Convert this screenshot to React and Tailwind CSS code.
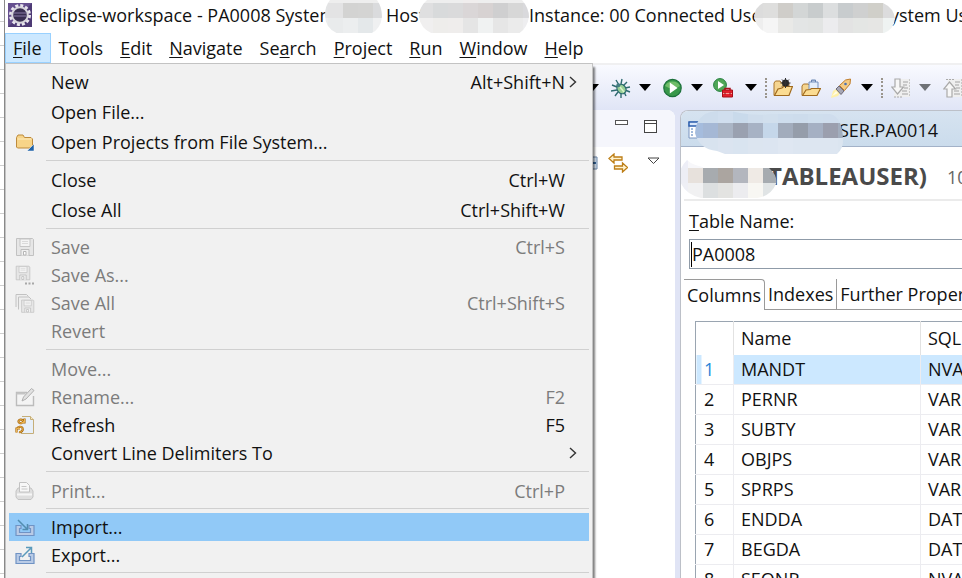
// src/App.jsx
import React from "react";

const MENUS = [
  { key: "F", rest: "ile", active: true },
  { key: "", rest: "Tools" },
  { key: "E", rest: "dit" },
  { key: "N", rest: "avigate" },
  { before: "Se", key: "a", rest: "rch" },
  { key: "P", rest: "roject" },
  { key: "R", rest: "un" },
  { key: "W", rest: "indow" },
  { key: "H", rest: "elp" },
];

const FILE_MENU = [
  { label: "New", keys: "Alt+Shift+N", sub: true, tall: true },
  { label: "Open File...", tall: true },
  { label: "Open Projects from File System...", icon: "project", tall: true },
  { sep: true },
  { label: "Close", keys: "Ctrl+W", tall: true },
  { label: "Close All", keys: "Ctrl+Shift+W", tall: true },
  { sep: true },
  { label: "Save", keys: "Ctrl+S", icon: "save", disabled: true },
  { label: "Save As...", icon: "saveAs", disabled: true },
  { label: "Save All", keys: "Ctrl+Shift+S", icon: "saveAll", disabled: true },
  { label: "Revert", disabled: true },
  { sep: true, wide: true },
  { label: "Move...", disabled: true },
  { label: "Rename...", keys: "F2", icon: "rename", disabled: true },
  { label: "Refresh", keys: "F5", icon: "refresh" },
  { label: "Convert Line Delimiters To", sub: true },
  { sep: true, wide: true },
  { label: "Print...", keys: "Ctrl+P", icon: "print", disabled: true },
  { sep: true },
  { label: "Import...", icon: "import", selected: true },
  { label: "Export...", icon: "export" },
  { sep: true },
];

const ROWS = [
  ["MANDT", "NVARCHAR"],
  ["PERNR", "VARCHAR"],
  ["SUBTY", "VARCHAR"],
  ["OBJPS", "VARCHAR"],
  ["SPRPS", "VARCHAR"],
  ["ENDDA", "DATE"],
  ["BEGDA", "DATE"],
  ["SEQNR", "NVARCHAR"],
];

const Icon = ({ children, className = "h-5 w-5" }) => (
  <svg viewBox="0 0 20 20" fill="none" className={`shrink-0 ${className}`} aria-hidden="true">
    {children}
  </svg>
);

const Floppy = () => (
  <>
    <path d="M1.5 1.5h16l1 1v16h-17z" fill="#e6e6e6" stroke="#c2c2c2" />
    <path d="M5 2h10v7.500H5z" fill="#f4f4f4" stroke="#c6c6c6" />
    <path d="M7 4.500h6M7 6.500h6" stroke="#dadada" />
    <path d="M6 18.500v-6h8v6" fill="#f0f0f0" stroke="#bdbdbd" />
    <path d="M8.500 14.500h2.500v3.500H8.500z" fill="#fff" stroke="#b5b5b5" />
  </>
);

const Tray = () => (
  <path
    d="M1 8.500h5v3H4.500v4h11v-4H14v-3h5v10H1z"
    fill="#b9cbe6"
    stroke="#7093c4"
    strokeWidth="1.200"
  />
);

const MENU_ICONS = {
  project: (
    <>
      <path d="M1.500 15V5.500L3 3h5l1.500 2.500H16L17.500 7v8l-1 1h-14z" fill="#f7d488" stroke="#bd8b3c" />
      <path d="M2.500 7h14" stroke="#fdebbd" />
      <path d="M19 12v7h-7z" fill="#1e62a8" stroke="#fff" strokeWidth=".5" />
    </>
  ),
  save: <Floppy />,
  saveAs: (
    <>
      <g transform="scale(.8)">
        <Floppy />
      </g>
      <path d="M10 18.500h2M13.500 18.500h2M17 18.500h2" stroke="#a8a8a8" strokeWidth="2" />
    </>
  ),
  saveAll: (
    <>
      <path d="M1 14V1.500h10.500l2 2" fill="#eee" stroke="#c2c2c2" />
      <path d="M3.500 16.500V4H14l2 2" fill="#eee" stroke="#c2c2c2" />
      <g transform="translate(5.5 6) scale(.72)">
        <Floppy />
      </g>
    </>
  ),
  rename: (
    <>
      <path d="M12 5.500H1.500v13h17V9" fill="#f4f4f4" stroke="#bcbcbc" strokeWidth="1.400" />
      <path d="M1.500 6.500h9" stroke="#c4c4c4" strokeWidth="2" />
      <path d="M7 14l1.500-4L16.500 1.500l2.500 2L11 12z" fill="#e2e2e2" stroke="#b0b0b0" />
    </>
  ),
  refresh: (
    <>
      <path d="M7 1.500h8.500l3 3v14H6" fill="#e7eff9" stroke="#c5ae79" />
      <path d="M15.500 1.500v3h3" fill="#f8e8bf" stroke="#c5ae79" />
      <path
        d="M9 7C8 4 3.500 4 3.500 6.500c0 1.500 2 2 3.500 1.500M9.500 3.500v4H6.500M2 14c.5-2.500 4.500-3 5.500-1s-1 4.500-3.500 4M1.500 17.500v-4H5"
        stroke="#a8690f"
        strokeWidth="2.200"
      />
      <path
        d="M9 7C8 4 3.500 4 3.500 6.500c0 1.500 2 2 3.500 1.500M9.500 3.500v4H6.500M2 14c.5-2.500 4.500-3 5.500-1s-1 4.500-3.500 4M1.500 17.500v-4H5"
        stroke="#edb653"
        strokeWidth="1"
      />
    </>
  ),
  print: (
    <>
      <path d="M1 10l2-3h13l2 3v6l-2 2.500H3L1 16z" fill="#dedede" stroke="#c4c4c4" />
      <path d="M4.500 11V1.500h7l3 3V11z" fill="#f7f7f7" stroke="#c2c2c2" />
      <path d="M6.500 5.500h5M6.500 8h6" stroke="#c6c6c6" />
      <path d="M2 13.500h15" stroke="#f6f6f6" strokeWidth="2" />
    </>
  ),
  import: (
    <>
      <Tray />
      <path d="M3 3l9 9M12.500 7v5.500H7.500" stroke="#528db0" strokeWidth="1.500" />
    </>
  ),
  export: (
    <>
      <Tray />
      <path d="M7 12l9-9M11 2.500h5.500V8" stroke="#5b9abb" strokeWidth="1.500" />
    </>
  ),
};

// Pixelated patch that hides private names; cells are 15px wide
const Mosaic = ({ id, width, height, shape, rows, className }) => (
  <svg width={width} height={height} className={`absolute ${className}`} aria-hidden="true">
    <clipPath id={id}>
      <path d={shape} />
    </clipPath>
    <g clipPath={`url(#${id})`} shapeRendering="crispEdges">
      {rows.map((row) =>
        row.colors.map((color, i) => (
          <rect
            key={`${row.y}-${i}`}
            x={row.x + i * 15}
            y={row.y}
            width="15"
            height={row.h}
            fill={color}
          />
        ))
      )}
    </g>
  </svg>
);

const TitleBar = () => (
  <header className="flex h-[33px] items-center overflow-hidden pl-[3px] text-[18px] leading-[30px] whitespace-nowrap">
    <svg viewBox="0 0 24 24" className="mr-[7px] mb-1 h-6 w-6 shrink-0" aria-hidden="true">
      <rect width="24" height="24" fill="#4d3a75" />
      <path d="M0 0h24L0 24z" fill="#66508f" />
      <circle cx="12" cy="12" r="9.500" fill="none" stroke="#e8e5ee" strokeWidth="3" strokeDasharray="3 1.970" />
      <circle cx="12" cy="12" r="7.800" fill="#382e50" stroke="#d7d5dc" strokeWidth="2" />
      <path d="M5.500 10h13M5.500 13h13" stroke="#6d6289" strokeWidth="1.500" />
    </svg>
    <div className="relative h-full w-[347px] shrink-0">
      eclipse-workspace - PA0008 System
      <Mosaic
        id="m-system"
        className="top-0 right-1"
        width={57}
        height={36}
        shape="M5 0H52Q57 7 57 17Q55 31 44 34Q30 37 14 34Q0 29 0 15Q0 6 5 0Z"
        rows={[
          { x: -12, y: 0, h: 3, colors: ["#eee", "#eee", "#eee", "#eee", "#eee"] },
          { x: -12, y: 3, h: 15, colors: ["#e3e4e5", "#e3e3e4", "#d3d3d2", "#d4d4d3", "#dadbdd"] },
          { x: -12, y: 18, h: 15, colors: ["#ecedee", "#e9ebec", "#eceeef", "#e4e8ea", "#eff0f1"] },
          { x: -12, y: 33, h: 4, colors: ["#f3f3f3", "#f3f3f3", "#ecefef", "#eef0f0", "#f3f3f3"] },
        ]}
      />
    </div>
    <div className="relative h-full w-[143px] shrink-0">
      Host
      <Mosaic
        id="m-host"
        className="top-0 right-0"
        width={110}
        height={38}
        shape="M8 0H103Q110 8 110 17Q108 30 97 35Q80 38 56 38Q46 36 18 35Q2 31 0 17Q0 7 8 0Z"
        rows={[
          { x: -1, y: 0, h: 3, colors: ["#eee", "#eee", "#eee", "#f0eded", "#eee", "#eee", "#eee", "#eee"] },
          { x: -1, y: 3, h: 15, colors: ["#dfdfe0", "#d8dadb", "#dadadb", "#dad6d7", "#d7d2d2", "#cfcfd0", "#d7d7d7", "#d9d9dc"] },
          { x: -1, y: 18, h: 15, colors: ["#f0efef", "#eeedeb", "#efedec", "#e5e5e5", "#f0f2f2", "#e6e6e6", "#ebebeb", "#eeeef0"] },
          { x: -1, y: 33, h: 5, colors: ["#eee", "#eee", "#eee", "#eceeee", "#e4e6e6", "#e9e9e9", "#eee", "#eee"] },
        ]}
      />
    </div>
    <div className="relative h-full w-[361px] shrink-0">
      Instance: 00 Connected Use
      <Mosaic
        id="m-user"
        className="top-[3px] -right-[5px]"
        width={141}
        height={30}
        shape="M9 0H129Q140 5 141 16Q140 26 130 30H13Q2 25 0 14Q1 4 9 0Z"
        rows={[
          { x: -6, y: 0, h: 15, colors: ["#dcdcdc", "#dededd", "#cfcdc9", "#d3d6d6", "#c8cccd", "#dcdedf", "#c8ccce", "#cfd0d0", "#d0cfc9", "#dcdcdd", "#d6d6d8"] },
          { x: -6, y: 15, h: 15, colors: ["#eee", "#f5f5f5", "#e9e9e7", "#e3e5e5", "#e2e4e3", "#ececee", "#e3e3e3", "#e4e6e4", "#e6e6e4", "#eff3f2", "#d8d9dc"] },
        ]}
      />
    </div>
    <div className="h-full shrink-0">ystem Us</div>
  </header>
);

const FileMenu = () => (
  <div
    role="menu"
    className="absolute top-full left-0 z-10 w-[588px] border border-[#c3c3c3] bg-[#f1f1f1] pt-[3px] pr-[3px] pb-10 pl-[3px] shadow-[2px_4px_2px_rgba(0,0,0,0.5)]"
  >
    {FILE_MENU.map((item, i) => {
      if (item.sep) {
        return (
          <div key={i} role="separator" className={`pl-[37px] ${item.wide ? "h-[10px] pt-1" : "h-2 pt-[3px]"}`}>
            <div className="h-px bg-[#d0d0d0]" />
          </div>
        );
      }
      return (
        <button
          key={i}
          type="button"
          role="menuitem"
          className={`flex w-full items-center pl-[6px] text-left whitespace-nowrap ${
            item.tall ? "h-[30px]" : "h-7"
          } ${item.selected ? "bg-[#91c9f7]" : ""} ${item.disabled ? "text-[#7c7c7c]" : "text-[#111]"}`}
        >
          <span className="w-9 shrink-0">{item.icon && <Icon>{MENU_ICONS[item.icon]}</Icon>}</span>
          <span className="flex-1">{item.label}</span>
          <span>{item.keys}</span>
          <span className="flex w-6 shrink-0 pl-1">
            {item.sub && (
              <svg viewBox="0 0 8 12" className="h-3 w-2" fill="none" aria-hidden="true">
                <path d="M1 1l5.500 5L1 11" stroke="#333" strokeWidth="1.400" />
              </svg>
            )}
          </span>
        </button>
      );
    })}
  </div>
);

const MenuBar = () => (
  <nav className="relative flex h-[30px] shrink-0 text-[18px] leading-[28px]">
    {MENUS.map((m) => (
      <button
        key={m.key + m.rest}
        type="button"
        className={`border pr-2 pl-[7px] whitespace-nowrap ${
          m.active ? "border-[#99d1ff] bg-[#cce8ff]" : "border-transparent"
        }`}
      >
        {m.before}
        <span className="underline underline-offset-2">{m.key}</span>
        {m.rest}
      </button>
    ))}
    <FileMenu />
  </nav>
);

const DropArrow = ({ muted }) => (
  <svg viewBox="0 0 12 7" className="h-[7px] w-3 shrink-0" aria-hidden="true">
    <path d="M0 0h12L6 7z" fill={muted ? "#6f7276" : "#000"} />
  </svg>
);

const Dots = () => <div className="h-5 shrink-0 border-l-2 border-dotted border-[#9a958c]" />;

const ToolButton = ({ label, children, className }) => (
  <button type="button" aria-label={label} className={`shrink-0 ${className}`}>
    <Icon>{children}</Icon>
  </button>
);

const OpenFolder = () => (
  <>
    <path d="M1 17V5l1.500-2H7l1.500 2H16v4" fill="#f5d590" stroke="#a9752a" />
    <path d="M1.500 17.500L5 11l4-1 1.500-1.500H19.500L16 17.500z" fill="#fbdc92" stroke="#a06a1d" strokeWidth="1.200" />
  </>
);

const PageLines = () => (
  <>
    <path d="M5 1h14v18H3" fill="#efefef" />
    <path d="M18.500 1v18" stroke="#c9c9c9" strokeDasharray="2 1" />
    <path d="M12 4h5M12 7h4M13 10h4M11 13h5M11 16h6" stroke="#bdbdbd" strokeWidth="1.300" />
  </>
);

const Toolbar = () => (
  <div className="flex h-[47px] shrink-0 items-center overflow-hidden border-t-2 border-[#f0f0f1] bg-linear-to-b from-[#f9faff] to-[#e0e5f6] pl-[582px]">
    <DropArrow />
    <ToolButton label="Debug" className="ml-3">
      <path
        d="M5 2l3 5M11 1l-1 5M16 4l-4 4M1 7l5 2M0 13l6-1M4 18l3-4M10 20v-5M15 18l-2-4M19 14l-5-2M19 9l-5 1"
        stroke="#2f6b70"
        strokeWidth="1.400"
      />
      <ellipse cx="10.500" cy="11" rx="4.200" ry="5" transform="rotate(-38 10.500 11)" fill="#98cf96" stroke="#27676b" strokeWidth="1.300" />
      <circle cx="7.300" cy="7.300" r="2" fill="#467e83" />
      <path d="M9 9l4 5" stroke="#d9f3c7" strokeWidth="1.500" />
    </ToolButton>
    <div className="ml-2 flex"><DropArrow /></div>
    <ToolButton label="Run" className="ml-3">
      <circle cx="9.500" cy="10" r="8.700" fill="#38984a" stroke="#1c703b" strokeWidth="1.200" />
      <path d="M2 8a8 7 0 0 1 15 0q-7 5-15 0z" fill="#70bd69" />
      <path d="M6.800 4.500v11L14.500 10z" fill="#fff" />
    </ToolButton>
    <div className="ml-2 flex"><DropArrow /></div>
    <ToolButton label="External Tools" className="ml-[10px]">
      <circle cx="7" cy="7" r="6.400" fill="#4fa657" stroke="#26803f" />
      <path d="M5 3v8l6-4z" fill="#fff" />
      <path d="M12 12v-1.500h5V12" stroke="#a80d19" strokeWidth="1.500" />
      <path d="M9.500 12h10v7h-10z" fill="#e3202c" stroke="#a60e18" />
      <path d="M10 15.500h9" stroke="#ff9c96" />
      <path d="M12 14.500v2M17 14.500v2" stroke="#7d0a12" />
    </ToolButton>
    <div className="ml-3 flex"><DropArrow /></div>
    <div className="ml-2 flex"><Dots /></div>
    <ToolButton label="Open Type" className="ml-[6px]">
      <OpenFolder />
      <circle cx="12.500" cy="5" r="3.500" fill="#222" />
      <path d="M12.500 0v10M7.500 5h10M9 1.500l7 7M16 1.500l-7 7" stroke="#333" />
    </ToolButton>
    <ToolButton label="Open Task" className="ml-2">
      <path d="M1 17V8l1.500-2H7l1.500 1H16v4" fill="#f5d590" stroke="#a9752a" />
      <path d="M8 4h9v9H8z" fill="#e4eefb" stroke="#7490bd" />
      <path d="M10.500 4V2h4v2" fill="#a6b9d7" stroke="#6784b3" />
      <path d="M1.500 17.500L5 12l4-.5 1.500-1H19.500L16 17.500z" fill="#fbdc92" stroke="#a06a1d" strokeWidth="1.200" />
    </ToolButton>
    <ToolButton label="Search" className="ml-[10px]">
      <path d="M0 20l2-7 3-2 4 4-2 3z" fill="#fff1a8" />
      <path d="M1 18l4-5 2 2z" fill="#fffce5" />
      <path d="M5 11l3-3 5 5-3 3.500z" fill="#a7a7b5" stroke="#6e6a77" />
      <path d="M8.500 7.500L14.500 2l5-1-.5 5-5.500 6.500z" fill="#f5ca83" stroke="#bf7d2b" />
      <circle cx="14.500" cy="6" r="1.300" fill="#4e73b1" />
    </ToolButton>
    <div className="ml-[10px] flex"><DropArrow /></div>
    <div className="ml-2 flex"><Dots /></div>
    <ToolButton label="Next Annotation" className="ml-2">
      <PageLines />
      <path d="M4 1h5v8h3.500L6.500 16 .7 9H4z" fill="#f7f7f7" stroke="#a9a9a9" strokeWidth="1.200" />
      <path d="M3 19h9" stroke="#aaa" strokeDasharray="2 1" />
    </ToolButton>
    <div className="ml-2 flex"><DropArrow muted /></div>
    <ToolButton label="Previous Annotation" className="ml-3">
      <PageLines />
      <path d="M4 19h5v-8h3.500L6.500 4 .7 11H4z" fill="#f7f7f7" stroke="#a9a9a9" strokeWidth="1.200" />
      <path d="M3 1.500h9" stroke="#aaa" strokeDasharray="2 1" />
    </ToolButton>
  </div>
);

const SideView = () => (
  <section className="flex w-[670px] shrink-0 flex-col rounded-tr-lg bg-white">
    <div className="flex h-[37px] shrink-0 items-start justify-end rounded-tr-lg bg-[#f5f6fc] pt-[10px] pr-[18px]">
      <button type="button" aria-label="Minimize" className="mr-4 h-[5px] w-[13px] border border-[#555] bg-white" />
      <button type="button" aria-label="Maximize" className="flex h-[13px] w-[13px] items-start border border-[#444] bg-white pt-[2px]">
        <span className="h-px w-full bg-[#444]" />
      </button>
    </div>
    <div className="flex items-start justify-end pt-[6px] pr-[15px]">
      <Icon className="mr-[10px] h-5 w-5">
        <path d="M5 4h14v12H5z" fill="#d8e7f7" stroke="#6a86a8" />
        <path d="M14 10h4" stroke="#35679c" strokeWidth="2" />
      </Icon>
      <Icon className="mr-[19px] h-5 w-5">
        <path
          d="M1 5.500l5-4.500v3h8v3H6v3z"
          fill="#fff3cf"
          stroke="#bd7e16"
          strokeWidth="1.300"
        />
        <path
          d="M19.500 14.500l-5-4.500v3h-8v3h8v3z"
          fill="#fff3cf"
          stroke="#bd7e16"
          strokeWidth="1.300"
        />
      </Icon>
      <svg viewBox="0 0 13 8" className="mt-1 h-2 w-[13px]" aria-hidden="true">
        <path d="M1 1h11L6.500 6.500z" fill="#fff" stroke="#444" />
      </svg>
    </div>
  </section>
);

const ColumnsTable = () => (
  <table className="w-full table-fixed border-collapse border-t border-l border-[#9aa5b1] text-left text-[18px] leading-[27px] whitespace-nowrap">
    <colgroup>
      <col className="w-[38px]" />
      <col className="w-[187px]" />
      <col />
    </colgroup>
    <thead>
      <tr className="h-[33px]">
        <th aria-label="Row" className="border-r border-[#e2e2e2]" />
        <th className="border-r border-[#e2e2e2] pl-[7px] font-normal">Name</th>
        <th className="overflow-hidden pl-[7px] font-normal">SQL Data Type</th>
      </tr>
    </thead>
    <tbody>
      {ROWS.map(([name, type], i) => (
        <tr key={name} className={`h-[30px] ${i === 0 ? "bg-[#cce8ff]" : ""}`}>
          <td
            className={`border-r border-b border-[#ececf0] pl-2 ${
              i === 0 ? "bg-white bg-linear-to-r from-[#cce8ff] from-[5px] to-white to-[5px] text-[#2a86d8]" : ""
            }`}
          >
            {i + 1}
          </td>
          <td className="border-r border-b border-[#ececf0] pl-[7px]">{name}</td>
          <td className="overflow-hidden border-b border-[#ececf0] pl-[7px]">{type}</td>
        </tr>
      ))}
    </tbody>
  </table>
);

const Editor = () => (
  <section className="ml-[5px] flex min-w-0 flex-1 flex-col overflow-hidden rounded-tl-lg border-t border-l border-[#bcc0c8] bg-white">
    <div className="relative flex h-9 shrink-0 items-center border-b border-[#a3b2c8] bg-linear-to-b from-[#d6e3f0] to-[#cbdcec] pt-[3px] pl-[7px] text-[18px]">
      <svg viewBox="0 0 16 18" className="h-[18px] w-4" aria-hidden="true">
        <path d="M1 1h14v16H1z" fill="#fff" stroke="#7b95c0" />
        <path d="M1 1h14v4H1z" fill="#d9e7fb" stroke="#2d5fae" strokeWidth="1.500" />
        <path d="M3 8h2M3 11h2M3 14h2" stroke="#4776b8" />
      </svg>
      <span className="w-[234px] text-right whitespace-nowrap">USER.PA0014</span>
      <Mosaic
        id="m-tab"
        className="top-0 left-[14px] z-10"
        width={149}
        height={43}
        shape="M10 3Q24-3 45 2Q60 5 76 3H135Q148 6 148 30Q148 38 142 43H30L22 40Q4 38 0 22Q0 10 10 3Z"
        rows={[
          { x: -7, y: -3, h: 15, colors: ["#ccdcec", "#cddcec", "#d0deee", "#c9daeb", "#cfddec", "#d1dfed", "#cedded", "#cddcec", "#cfdeed", "#cfdded", "#cedded"] },
          { x: -7, y: 12, h: 15, colors: ["#a5bcdd", "#a5b8d5", "#aab5c5", "#9aa1b0", "#a7b2c4", "#c5d7ea", "#a2acbc", "#959daa", "#a5b0c3", "#9b9fae", "#a2adbd"] },
          { x: -7, y: 27, h: 16, colors: ["#d7e2ef", "#d8e3ef", "#dbe4f0", "#d9e4f0", "#dce5f0", "#dce5f1", "#dfe7f2", "#dde6f1", "#dde6f1", "#dde6f1", "#dbe5f0"] },
        ]}
      />
    </div>
    <div className="relative ml-[3px] flex h-[54px] shrink-0 items-center border-b-2 border-[#ebebeb] pl-[84px] whitespace-nowrap">
      <h1 className="w-[179px] shrink-0 pt-[6px] text-[24px] leading-[30px] font-bold text-[#4a4a4a]">TABLEAUSER)</h1>
      <span className="pt-2 text-[18px] text-[#666]">10</span>
      <Mosaic
        id="m-schema"
        className="top-[13px] -left-[5px]"
        width={98}
        height={38}
        shape="M8 0Q14 6 30 8H90Q99 16 97 24Q92 36 78 38H22Q4 34 0 18Q0 8 8 0Z"
        rows={[
          { x: -6, y: 0, h: 8, colors: ["#edeef7", "#f7f7fa", "#fff", "#fff", "#fff", "#fff", "#fff"] },
          { x: -6, y: 8, h: 15, colors: ["#edeef5", "#e7e1dc", "#a7abaf", "#aba5a0", "#b3b6be", "#efeae5", "#a6abb0"] },
          { x: -6, y: 23, h: 15, colors: ["#eeeff5", "#f1f1f2", "#dcdfe0", "#e3e3e1", "#ececef", "#f8f7f3", "#e0e4e5"] },
        ]}
      />
    </div>
    <div className="pt-[6px] pl-2 text-[18px]">
      <label htmlFor="tableName" className="block leading-7">
        <span className="underline underline-offset-2">T</span>able Name:
      </label>
      <div className="mt-1 flex h-[30px] items-center border border-r-0 border-[#8f9ba8] pl-px">
        <span className="h-[25px] w-px shrink-0 bg-black" />
        <input id="tableName" defaultValue="PA0008" className="w-full outline-none" />
      </div>
    </div>
    <div role="tablist" className="mt-[10px] ml-[3px] flex h-[31px] shrink-0 text-[18px] leading-[31px] whitespace-nowrap">
      <button type="button" role="tab" className="rounded-tr border-t border-r border-[#9a9a9a] px-[3px]">
        Columns
      </button>
      <button type="button" role="tab" className="border-r border-b border-[#9a9a9a] px-[3px]">
        Indexes
      </button>
      <button type="button" role="tab" className="flex-1 border-b border-[#9a9a9a] px-[3px] text-left">
        Further Properties
      </button>
    </div>
    <div className="pt-[11px] pl-[14px]">
      <ColumnsTable />
    </div>
  </section>
);

const App = () => {
  return (
    <div className="flex h-screen overflow-hidden bg-white font-['Open_Sans',sans-serif] text-[#111]">
      {/* strip of the spreadsheet behind the window */}
      <div className="w-[5px] shrink-0 border-r border-[#8a8a8a] bg-[repeating-linear-gradient(to_bottom,#fff_0px,#fff_21px,#cfcfcf_21px,#cfcfcf_22px,#fff_22px,#fff_24px)]" />
      <div className="flex min-w-0 flex-1 flex-col">
        <TitleBar />
        <MenuBar />
        <Toolbar />
        <main className="flex min-h-0 flex-1 bg-[#e0e4f5]">
          <SideView />
          <Editor />
        </main>
      </div>
    </div>
  );
};

export default App;
